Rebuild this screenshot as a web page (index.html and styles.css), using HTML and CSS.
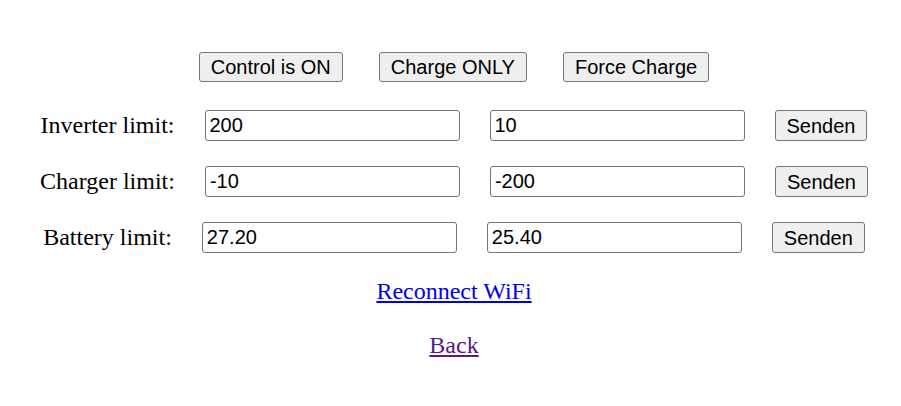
FILE: index.html
```html
<!DOCTYPE html>
<html>
<head>
<meta charset="utf-8">
<link rel="stylesheet" href="styles.css">
</head>
<body>
<div class="page">
  <div class="modes">
    <button class="btn mode">Control is ON</button>
    <button class="btn mode">Charge ONLY</button>
    <button class="btn mode">Force Charge</button>
  </div>
  <div class="rows">
    <div class="row">
      <span class="label">Inverter limit:</span>
      <input class="field" type="text" value="200">
      <input class="field" type="text" value="10">
      <button class="btn send">Senden</button>
    </div>
    <div class="row">
      <span class="label">Charger limit:</span>
      <input class="field" type="text" value="-10">
      <input class="field" type="text" value="-200">
      <button class="btn send">Senden</button>
    </div>
    <div class="row">
      <span class="label">Battery limit:</span>
      <input class="field" type="text" value="27.20">
      <input class="field" type="text" value="25.40">
      <button class="btn send">Senden</button>
    </div>
  </div>
  <div class="links">
    <a class="link" href="#wifi">Reconnect WiFi</a>
    <a class="link visited" href="#back">Back</a>
  </div>
</div>
</body>
</html>
```

FILE: styles.css
```css
html, body {
  margin: 0;
  padding: 0;
  background: #ffffff;
}
body {
  font-family: "Liberation Serif", "Times New Roman", serif;
  font-size: 24px;
  color: #000000;
}
.page {
  width: 901px;
  height: 406px;
  padding-left: 7px;
  box-sizing: border-box;
  display: flex;
  flex-direction: column;
  align-items: center;
}
.modes {
  margin-top: 52px;
  display: flex;
  gap: 36px;
}
.btn {
  font-family: "Liberation Sans", Arial, sans-serif;
  font-size: 20px;
  color: #000000;
  background: #efefef;
  border: 1px solid #767676;
  border-radius: 3px;
  height: 30px;
  padding: 0 11px;
  line-height: 26px;
  margin: 0;
  white-space: nowrap;
}
.send {
  height: 31px;
}
.rows {
  margin-top: 28px;
  display: flex;
  flex-direction: column;
  align-items: center;
  gap: 25px;
}
.row {
  display: flex;
  align-items: center;
  gap: 30px;
  height: 31px;
}
.label {
  white-space: nowrap;
  line-height: 27px;
}
.field {
  font-family: "Liberation Sans", Arial, sans-serif;
  font-size: 20px;
  color: #000000;
  width: 255px;
  height: 31px;
  box-sizing: border-box;
  border: 1px solid #767676;
  border-radius: 3px;
  padding: 0 4px;
  margin: 0;
  background: #ffffff;
}
.links {
  margin-top: 25px;
  display: flex;
  flex-direction: column;
  align-items: center;
  gap: 27px;
}
.link {
  line-height: 27px;
  color: #0000ee;
  text-decoration: underline;
}
.link.visited {
  color: #551a8b;
}
```
